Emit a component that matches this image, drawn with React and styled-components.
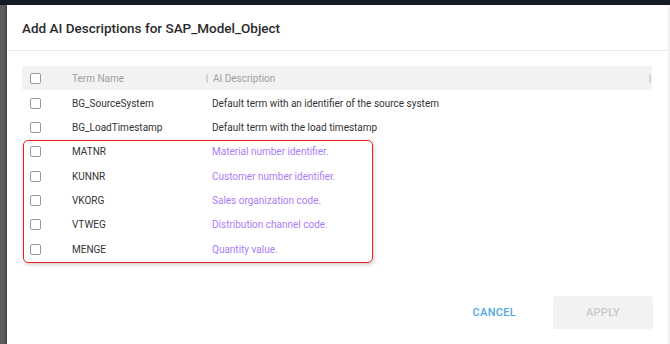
import React from "react";
import styled, { createGlobalStyle } from "styled-components";

const Global = createGlobalStyle`
  html, body { margin: 0; padding: 0; background: #ffffff; }
  body { font-family: Roboto, "Liberation Sans", Arial, sans-serif; width: 670px; height: 344px; overflow: hidden; }
`;

const Page = styled.div`
  display: flex;
  flex-direction: column;
  width: 670px;
  height: 344px;
`;

const TopBar = styled.div`
  height: 5px;
  background: #141b27;
  flex: none;
`;

const Body = styled.div`
  flex: 1;
  display: flex;
  min-height: 0;
`;

const LeftStrip = styled.div`
  width: 7px;
  background: linear-gradient(to right, #5c5c5c 0 5px, #4a4a4a 5px 7px);
  flex: none;
`;

const RightStrip = styled.div`
  width: 2px;
  box-sizing: border-box;
  background: #f6f4ef;
  border-left: 1px solid #ececec;
  flex: none;
`;

const Dialog = styled.div`
  flex: 1;
  display: flex;
  flex-direction: column;
  background: #ffffff;
`;

const Header = styled.div`
  height: 46px;
  box-sizing: border-box;
  padding: 15px 15px 0 15px;
  border-bottom: 1px solid #ececec;
`;

const Title = styled.h2`
  margin: 0;
  font-size: 13.5px;
  line-height: 17px;
  font-weight: 500;
  color: #2b2b2b;
`;

const Content = styled.div`
  padding: 15px 16px 0 15px;
`;

const TableHead = styled.div`
  display: grid;
  grid-template-columns: 50px 134px 1fr;
  align-items: center;
  height: 24px;
  background: #f2f2f2;
  border-radius: 2px;
  color: #a0a0a0;
  font-size: 10px;
`;

const Rows = styled.div`
  position: relative;
  padding-top: 1px;
`;

const Row = styled.div`
  display: grid;
  grid-template-columns: 50px 134px 1fr;
  align-items: center;
  height: 24.33px;
  font-size: 10px;
  color: #333333;
`;

const CheckCell = styled.div`
  display: flex;
  align-items: center;
  padding-left: 8px;
`;

const Checkbox = styled.span`
  display: block;
  width: 9px;
  height: 9px;
  border: 1.5px solid #9a9a9a;
  border-radius: 2px;
  background: #fff;
`;

const HeadCell = styled.div`
  display: flex;
  align-items: center;
  gap: 5px;
  padding-right: ${(p) => (p.$last ? "1px" : "0")};
`;

const Sep = styled.span`
  display: block;
  width: 2px;
  height: 9px;
  background: #d6d6d6;
  flex: none;
`;

const HeadLabel = styled.span`
  flex: 1;
`;

const TermCell = styled.div`
  white-space: nowrap;
`;

const DescCell = styled.div`
  white-space: nowrap;
  padding-left: 6px;
  color: ${(p) => (p.$ai ? "#a97df6" : "#333333")};
`;

const Highlight = styled.div`
  position: absolute;
  left: 1px;
  top: 50px;
  width: 350px;
  height: 123px;
  box-sizing: border-box;
  border: 1.5px solid #f01b1b;
  border-radius: 5px;
  box-shadow: 1px 2px 4px rgba(0, 0, 0, 0.18);
  pointer-events: none;
`;

const Footer = styled.div`
  margin-top: auto;
  display: flex;
  justify-content: flex-end;
  align-items: center;
  gap: 21px;
  padding: 0 15px 15px 0;
`;

const CancelButton = styled.button`
  border: none;
  background: transparent;
  padding: 0 16px;
  height: 33px;
  font-family: inherit;
  font-size: 11px;
  font-weight: 500;
  letter-spacing: 0.3px;
  color: #4da8e2;
  cursor: pointer;
`;

const ApplyButton = styled.button`
  border: none;
  width: 100px;
  height: 33px;
  border-radius: 3px;
  background: #f2f2f2;
  font-family: inherit;
  font-size: 11px;
  font-weight: 500;
  letter-spacing: 0.3px;
  color: #c9c9c9;
`;

const rows = [
  { term: "BG_SourceSystem", desc: "Default term with an identifier of the source system" },
  { term: "BG_LoadTimestamp", desc: "Default term with the load timestamp" },
  { term: "MATNR", desc: "Material number identifier.", ai: true },
  { term: "KUNNR", desc: "Customer number identifier.", ai: true },
  { term: "VKORG", desc: "Sales organization code.", ai: true },
  { term: "VTWEG", desc: "Distribution channel code.", ai: true },
  { term: "MENGE", desc: "Quantity value.", ai: true },
];

export default function App() {
  return (
    <Page>
      <Global />
      <TopBar />
      <Body>
        <LeftStrip />
        <Dialog>
          <Header>
            <Title>Add AI Descriptions for SAP_Model_Object</Title>
          </Header>
          <Content>
            <TableHead>
              <CheckCell>
                <Checkbox />
              </CheckCell>
              <HeadCell>
                <HeadLabel>Term Name</HeadLabel>
              </HeadCell>
              <HeadCell $last>
                <Sep />
                <HeadLabel>AI Description</HeadLabel>
                <Sep />
              </HeadCell>
            </TableHead>
            <Rows>
              {rows.map((r) => (
                <Row key={r.term}>
                  <CheckCell>
                    <Checkbox />
                  </CheckCell>
                  <TermCell>{r.term}</TermCell>
                  <DescCell $ai={r.ai}>{r.desc}</DescCell>
                </Row>
              ))}
              <Highlight />
            </Rows>
          </Content>
          <Footer>
            <CancelButton>CANCEL</CancelButton>
            <ApplyButton disabled>APPLY</ApplyButton>
          </Footer>
        </Dialog>
        <RightStrip />
      </Body>
    </Page>
  );
}
